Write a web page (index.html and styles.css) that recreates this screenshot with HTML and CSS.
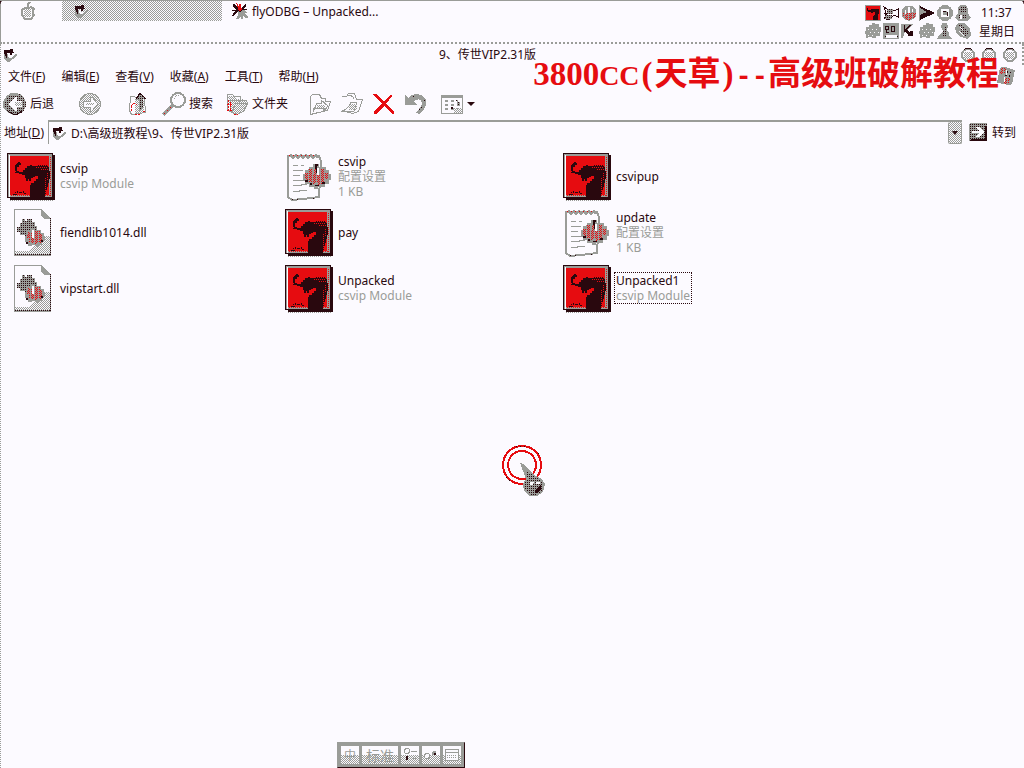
FILE: index.html
```html
<!DOCTYPE html>
<html lang="zh-CN">
<head>
<meta charset="utf-8">
<title>9、传世VIP2.31版</title>
<link rel="stylesheet" href="styles.css">
</head>
<body>
<svg class="defs" aria-hidden="true">
  <defs>
    <pattern id="mesh" width="2" height="2" patternUnits="userSpaceOnUse"><path fill="#9a9c98" d="M0 0h1v1h-1zM1 1h1v1h-1z"/></pattern>
    <pattern id="dark" width="2" height="2" patternUnits="userSpaceOnUse"><path fill="#9a9c98" d="M0 0h2v2h-2z"/><path fill="#29080e" d="M0 0h1v1h-1z"/></pattern>
    <pattern id="redmesh" width="4" height="2" patternUnits="userSpaceOnUse"><path fill="#9a9c98" d="M0 0h4v2h-4z"/><path fill="#e60c10" d="M0 0h1v1h-1zM2 0h1v1h-1zM1 1h1v1h-1z"/></pattern>
  </defs>
  <symbol id="dragon" viewBox="0 0 48 48">
    <path fill="#29080e" d="M0 0h46v2h2v45H3v-2H0z"/><path fill="none" stroke="#9a9c98" stroke-dasharray="1 1" d="M3 47.500h44"/>
    <path fill="#9a9c98" d="M1 1h44v43H1z"/><path fill="#fcfaff" d="M2 2h1v42H2z"/>
    <path fill="#e60c10" d="M3 3h39v39H3z"/>
    <path fill="none" stroke="#e60c10" stroke-dasharray="1 1" d="M43.500 4v39M4 42.500h39"/>
    <path fill="#29080e" d="M13 10h1v2h-2v2h-2v4h2v1h4v-2h2v-2h2v-2h3v-1h2v1h6v-1h10v2h1v4h1v8h-1v4h-1v4h-1v3h-1v4h-1v3H23V32h1v-2h3v-2h2v-2h2v-3h-3v1h-2v1h-2v3h-2v-2h-1v2h-2v-3h-1v-3h-3v-1h-3v-1h-4v-1H9v-1H8v-6h1v-1h1v-1h1v-1h2z"/>
    <path fill="none" stroke="#e60c10" stroke-dasharray="1 1" d="M29 14.500h12M30 12.500h11M34 16.500h8"/>
    <path fill="none" stroke="#e60c10" stroke-dasharray="1 1" d="M38.500 25v16M40.500 20v8"/>
    <path fill="#29080e" d="M8 39h1v1H8zM10 38h1v2h-1zM12 39h3v1h-3zM16 38h1v2h-1zM6 41h4v1H6zM17 40h2v1h-2z"/>
  </symbol>
  <symbol id="dll" viewBox="0 0 48 48">
    <path fill="#fcfaff" stroke="#9a9c98" d="M7.500.500h27l9 9v37h-36z"/>
    <path fill="url(#mesh)" d="M34 27h9v19H8v-4h13l7-6h5z"/>
    <path fill="#9a9c98" d="M34 0l10 10h-6l-4-3z"/><path stroke="#29080e" stroke-dasharray="1 1" d="M8 45.500h35M43.500 9v37"/>
    <path fill="url(#dark)" d="M15 10h3v2h2v-2h5v3h3v4h2v5h-3v4h-5v3h-4v-3h-5v-3h-3v-5h3v-4h2z"/>
    <path fill="#9a9c98" d="M20 21h4v-2h3v2h7v3h3v3h1v5h-3v4h-3v2h-3v-2h-4v1h-4v-4h-3v-6h2z"/>
    <path fill="url(#redmesh)" d="M21 23h4v3h2v-4h6v3h3v6h-2v3h-5v2h-2v-2h-5v-5h-2z"/>
    <path fill="#fcfaff" d="M25 21h2v8h-2z"/><path fill="#29080e" d="M19 33h2v2h-2zM34 31h2v2h-2z"/>
  </symbol>
  <symbol id="ini" viewBox="0 0 48 48">
    <path fill="#fcfaff" stroke="#9a9c98" stroke-width="2" d="M3 3h31l2 5-2 36-7 1-20 2-4-3z"/>
    <path fill="none" stroke="#9a9c98" stroke-width="2" d="M3 4l3-2 2 3 3-3 2 3 3-3 2 3 3-3 2 3 3-3 2 3 3-3 2 3"/>
    <path stroke="#e60c10" stroke-dasharray="1 3" d="M4 2.500h28"/>
    <path fill="none" stroke="#9a9c98" d="M8 12.500h5M16 12.500h3M8 17.500h10M8 22.500h7M8 27.500h12M8 32.500h7l3-1h4M8 38.500h5l3-1h6"/>
    <path stroke="#29080e" stroke-dasharray="1 4" d="M7 46.500h7M28 45.500h5"/>
    <path fill="#9a9c98" d="M28 11h6v3h7v3h3v4h2v6h-2v4h-4v3h-7v2h-4v-2h-5v-3h-4v-4h-2v-6h2v-4h4v-3h4z"/>
    <path fill="url(#redmesh)" d="M23 16h4v5h2v-5h2v6h4v-6h5v4h3v6h-3v4h-3v2h-4v-2h-4v2h-3v-3h-4v-3h-2v-6h3z"/>
    <path fill="#29080e" d="M30 11h3v2h-1v7h-1zM20 27h3v2h-3zM25 30h2v2h-2zM37 29h3v2h-3zM30 32h4v1h-4z"/><path fill="#fcfaff" d="M32 15h2v7h-2z"/>
  </symbol>
  <symbol id="back" viewBox="0 0 24 24">
    <circle cx="12" cy="12" r="11" fill="url(#dark)"/><path fill="none" stroke="#29080e" d="M5 19q7 7 14 0"/><path fill="none" stroke="#9a9c98" stroke-width="2" d="M2 17A11 11 0 0 1 15 2"/>
    <path fill="#fcfaff" d="M12 5h2v4h5v6h-5v4h-2l-7-7z"/><path fill="url(#mesh)" d="M12 10h7v4h-7z"/>
  </symbol>
  <symbol id="forward" viewBox="0 0 24 24">
    <circle cx="12" cy="12" r="10.500" fill="url(#mesh)" stroke="#9a9c98"/>
    <path fill="#fcfaff" stroke="#9a9c98" d="M5 9h7V5h2l6 7-6 7h-2v-4H5z"/><path fill="url(#mesh)" d="M8 11h8v2h-8z"/>
  </symbol>
  <symbol id="up" viewBox="0 0 24 24">
    <path fill="#fcfaff" stroke="#9a9c98" d="M4.500 4.500h4l2 2h8l1 14-14 2-2-4z"/><path fill="url(#mesh)" d="M9 8h9v13H9z"/>
    <path fill="url(#dark)" d="M9 8l5-7 7 6h-4v8l-4 4V8z"/><path fill="none" stroke="#29080e" d="M10 7l4-6 6 6"/>
    <path fill="none" stroke="#e60c10" stroke-dasharray="2 1" d="M5 14q3-4 6-1M5 14v6M9 22h5M17 19h2"/>
  </symbol>
  <symbol id="search" viewBox="0 0 24 24">
    <path stroke="#9a9c98" stroke-width="4" d="M1 23l10-10"/><path stroke="#e60c10" stroke-dasharray="2 2" d="M2 22l8-8"/>
    <circle cx="16" cy="8" r="7" fill="#fcfaff" stroke="#9a9c98" stroke-width="2"/><path fill="none" stroke="#9a9c98" stroke-dasharray="1 1" d="M12 7q1-4 5-4"/>
  </symbol>
  <symbol id="folder" viewBox="0 0 24 24">
    <path fill="#fcfaff" stroke="#9a9c98" d="M2.500 18V2.500h5l2 2h6v4h6l1 3-4 8-7 3z"/><path fill="url(#mesh)" d="M3 4h6l2 3h8l3 5-4 8-7 2-6-6z"/>
    <path fill="none" stroke="#9a9c98" d="M7 20l4-9h12M5 8h8l2 3"/>
    <path stroke="#e60c10" stroke-dasharray="2 1" d="M3 8v12M5 10v8M2 12h6M2 18h6M9 22h4"/>
  </symbol>
  <symbol id="moveto" viewBox="0 0 24 24">
    <path fill="#fcfaff" stroke="#9a9c98" d="M2.500 22.500v-18l2-2h7l2 4h4v3h5l-3 9-9 2z"/><path fill="none" stroke="#9a9c98" d="M5 20l4-9h4V8l7 6-5 6v-4H6z"/><path fill="url(#mesh)" d="M9 13h8v4h-8z"/>
  </symbol>
  <symbol id="copyto" viewBox="0 0 24 24">
    <path fill="#fcfaff" stroke="#9a9c98" d="M1.500 4.500h5l2-3h6l2 6h6l-4 12-6 2-10-3"/><path fill="none" stroke="#9a9c98" d="M3 19q7-4 8-9h6l-3 9zM8 3q7 1 6 6"/><path fill="url(#mesh)" d="M9 12h8v6h-8z"/>
  </symbol>
  <symbol id="delete" viewBox="0 0 24 24">
    <path fill="none" stroke="#9a9c98" stroke-width="2" d="M3 3l18 18"/><path fill="#e60c10" d="M1 2h3l8 8 6-7h2v1l-6 8 8 8v2h-2l-8-8-8 8H2v-3l8-8-9-8z"/>
  </symbol>
  <symbol id="undo" viewBox="0 0 24 24">
    <path fill="#9a9c98" d="M1 3l3 3q6-6 13-3 7 4 5 10-2 5-6 9l-5-1q6-5 7-10-2-6-8-2l3 4H1z"/><path stroke="#29080e" stroke-dasharray="1 2" d="M9 4h2M20 8v3M18 15l-4 5"/>
  </symbol>
  <symbol id="views" viewBox="0 0 24 24">
    <path fill="#fcfaff" stroke="#9a9c98" d="M1.500 3.500h21v18h-21z"/><path fill="#9a9c98" d="M1 3h22v3H1z"/>
    <path stroke="#9a9c98" stroke-width="2" stroke-dasharray="3 3" d="M5 9h13M5 13h13M5 17h13"/><path fill="#29080e" d="M16 8h1v1h-1zM11 15h2v2h-2z"/><path fill="url(#dark)" d="M17 10h3v4h-3z"/><path fill="url(#mesh)" d="M14 16h8v5h-8z"/>
  </symbol>
  <symbol id="go" viewBox="0 0 20 20">
    <rect x="1" y="1" width="18" height="18" rx="2" fill="url(#dark)"/><path fill="none" stroke="#29080e" stroke-width="2" d="M3 18h15V4"/><path fill="#fcfaff" d="M4 9h7L8 5h3l5 5-5 5H8l3-4H4z"/>
  </symbol>
  <symbol id="book" viewBox="0 0 14 14">
    <path fill="#9a9c98" d="M1 3h3l1 6 3 1 4-4h2v2l-4 3-4 3H4l-3-3z"/><path fill="#29080e" d="M1 2h6V1h3v3h1v1H9v2H7V5H4v5H3V8H2V6H1z"/><path fill="#fcfaff" d="M5 6h2v2h2v2H6z"/>
  </symbol>
  <symbol id="splat" viewBox="0 0 16 16">
    <path fill="#9a9c98" d="M6 7h6l3 2v1h-3l4 4v1h-3l-2-3v4H9v-3l-3 3H4l2-4z"/><path fill="#29080e" d="M1 1h1l4 4h4l3-4h1v2l-3 3h4v1h-5l-2 2-2-1-5 5H0l3-5H0V7h4L1 3z"/><path fill="#e60c10" d="M4 0h1l2 4V1h2v3l1 2-1 2H7L6 5z"/>
  </symbol>
  <symbol id="winbutton" viewBox="0 0 16 16">
    <circle cx="8" cy="8" r="6" fill="#fcfaff" stroke="#9a9c98" stroke-width="2"/><path fill="url(#mesh)" d="M4 5h8v7H4z"/><path fill="none" stroke="#29080e" d="M4 3q4-4 8 0"/>
  </symbol>
  <symbol id="blob" viewBox="0 0 16 16">
    <path fill="#9a9c98" d="M1 4h3V2h3V0h3v1h4v3h2v5h-1v4h-4v2H7v-1H3v1H1v-4H0V8h1z"/><path stroke="#fcfaff" stroke-dasharray="1 3" d="M3 6h9M5 9h9M3 12h8"/>
  </symbol>
</svg>

<header class="menubar">
  <button class="apple" aria-label="Apple"><svg viewBox="0 0 14 18"><path fill="#fcfaff" stroke="#9a9c98" stroke-width="2" d="M5 6q2 1 5-1l3 2q-3 3 0 6l-3 4H4l-3-4V8l3-2z"/><path stroke="#9a9c98" stroke-width="2" d="M7 5V2l2-2"/><path fill="url(#mesh)" d="M3 7h7v8H3z"/></svg></button>
  <button class="task current" aria-label="9、传世VIP2.31版"><svg class="small"><use href="#book"/></svg></button>
  <button class="task"><svg class="task-icon"><use href="#splat"/></svg>flyODBG – Unpacked...</button>
  <div class="tray">
    <svg viewBox="0 0 16 16"><path fill="#e60c10" stroke="#9a9c98" d="M.500.500h15v15H.500z"/><path fill="#29080e" d="M2 3h1v2h3V4h8v5h-1v6H8v-4l2-2V7H8v1H6V7H3V6H2z"/></svg>
    <svg viewBox="0 0 16 16"><path fill="#fcfaff" stroke="#29080e" d="M1 2l3 2h5l2 2 4-2v8l-4-2-3 3-3 2-4-2 3-3-3-2h2z"/><path fill="url(#dark)" d="M4 4h6v5H4zM2 10h7v4H2z"/></svg>
    <svg viewBox="0 0 16 16"><circle cx="8" cy="8" r="7.500" fill="#9a9c98"/><path fill="url(#redmesh)" d="M1 8h14l-2 5-5 3-5-3z"/><path fill="#fcfaff" d="M7 2h2v6H7zM4 5h1v4H4zM11 4h1v3h-1z"/></svg>
    <svg viewBox="0 0 16 16"><path fill="#29080e" d="M1 1l15 7-15 7z"/><path fill="#9a9c98" d="M0 0h1v16H0zM1 3l7 4-7 3z"/></svg>
    <svg viewBox="0 0 16 16"><circle cx="8" cy="8" r="8" fill="#9a9c98"/><path fill="none" stroke="#fcfaff" stroke-width="2" d="M5 5h6v6H5z"/><path fill="#29080e" d="M6 6h3v1H6zM10 7h1v4h-1z"/></svg>
    <svg viewBox="0 0 16 16"><path fill="#9a9c98" d="M5 0h6l2 4v4l3 5-4 3H3l-3-3 3-5V3z"/><path fill="url(#dark)" d="M6 1h4l2 5-2 2H5L4 4zM3 10h9v3H3z"/><path fill="#fcfaff" d="M5 10h2v4H5z"/></svg>
    <svg><use href="#blob"/></svg>
    <svg viewBox="0 0 16 16"><path fill="#9a9c98" d="M0 0h16v16H0z"/><path fill="none" stroke="#29080e" d="M2 3h3v3H2zM3 6v3h3M8 3h3v5H8zM2 13.500h13"/><path fill="#fcfaff" d="M3 12h11v3H3z"/></svg>
    <svg viewBox="0 0 16 16"><path fill="#9a9c98" d="M0 1h12L4 9l-2 6H0z"/><path fill="#29080e" d="M3 2h1v4l5-4h1l-4 5 2 2h1l-1-1h4v5h-5v-2l-3-2H3z"/></svg>
    <svg><use href="#blob"/></svg>
    <svg viewBox="0 0 16 16"><path fill="#9a9c98" d="M5 0h5l1 4-2 3 3 3v3l4 3H0l3-5 3-3-2-4z"/><path fill="url(#dark)" d="M7 4h3v9H6z"/></svg>
    <svg viewBox="0 0 16 16"><path fill="#9a9c98" d="M3 0h6l6 6 1 6-4 4-6-2-4-3-2-6z"/><path fill="url(#dark)" d="M4 2l5 1 5 7-3 4-5-4z"/><path stroke="#fcfaff" d="M4 8l5 5M5 4l3 3"/></svg>
  </div>
  <div class="clock"><time>11:37</time><span>星期日</span></div>
</header>

<main class="window">
  <div class="titlebar">
    <svg class="small"><use href="#book"/></svg>
    <h1>9、传世VIP2.31版</h1>
    <div class="winbuttons">
      <button aria-label="最小化"><svg><use href="#winbutton"/></svg></button>
      <button aria-label="最大化"><svg><use href="#winbutton"/></svg></button>
      <button aria-label="关闭"><svg><use href="#winbutton"/></svg></button>
    </div>
  </div>
  <nav class="menus">
    <button>文件(<u>F</u>)</button><button>编辑(<u>E</u>)</button><button>查看(<u>V</u>)</button><button>收藏(<u>A</u>)</button><button>工具(<u>T</u>)</button><button>帮助(<u>H</u>)</button>
  </nav>
  <div class="toolbar">
    <button><svg><use href="#back"/></svg>后退</button>
    <button class="far" aria-label="前进"><svg><use href="#forward"/></svg></button>
    <button class="far" aria-label="向上"><svg><use href="#up"/></svg></button>
    <button class="near"><svg><use href="#search"/></svg>搜索</button>
    <button class="near"><svg><use href="#folder"/></svg>文件夹</button>
    <button class="mid" aria-label="移至"><svg><use href="#moveto"/></svg></button>
    <button aria-label="复制到"><svg><use href="#copyto"/></svg></button>
    <button aria-label="删除"><svg><use href="#delete"/></svg></button>
    <button aria-label="撤消"><svg><use href="#undo"/></svg></button>
    <button class="near" aria-label="查看"><svg><use href="#views"/></svg><i class="arrow"></i></button>
  </div>
  <form class="address">
    <label for="path">地址(<u>D</u>)</label>
    <div class="field">
      <svg class="small"><use href="#book"/></svg>
      <input id="path" type="text" value="D:\高级班教程\9、传世VIP2.31版">
      <button type="button" class="drop" aria-label="展开"><i class="arrow"></i></button>
    </div>
    <button type="button" class="go"><svg><use href="#go"/></svg>转到</button>
  </form>
  <ul class="files">
    <li><svg><use href="#dragon"/></svg><p>csvip<small>csvip Module</small></p></li>
    <li><svg><use href="#ini"/></svg><p>csvip<small>配置设置</small><small>1 KB</small></p></li>
    <li><svg><use href="#dragon"/></svg><p>csvipup</p></li>
    <li><svg><use href="#dll"/></svg><p>fiendlib1014.dll</p></li>
    <li><svg><use href="#dragon"/></svg><p>pay</p></li>
    <li><svg><use href="#ini"/></svg><p>update<small>配置设置</small><small>1 KB</small></p></li>
    <li><svg><use href="#dll"/></svg><p>vipstart.dll</p></li>
    <li><svg><use href="#dragon"/></svg><p>Unpacked<small>csvip Module</small></p></li>
    <li><svg><use href="#dragon"/></svg><p class="focused">Unpacked1<small>csvip Module</small></p></li>
  </ul>
</main>

<div class="banner">
  <span>3800<span class="caps">CC</span><span class="paren">(</span>天草<span class="paren">)</span><span class="dash">--</span>高级班破解教程</span>
  <svg viewBox="0 0 20 20"><path fill="#9a9c98" d="M4 2q4-3 8 0l7 2-3 14q-4 3-7 0l-8-1z"/><path fill="url(#redmesh)" d="M5 2h5l-1 6H4zM9 12h5l-1 6H8z"/><path fill="#29080e" d="M11 5h1v2h-1zM14 6h1v1h-1zM9 9h2v1H9zM13 9h1v2h-1z"/><path fill="#fcfaff" d="M10 4h1v5h-1zM8 11h1v5H8z"/></svg>
</div>

<svg class="pointer" viewBox="0 0 46 54">
  <circle cx="21" cy="21" r="19" fill="none" stroke="#e60c10" stroke-width="2"/><circle cx="21" cy="21" r="14" fill="none" stroke="#e60c10" stroke-width="2"/>
  <path stroke="#29080e" stroke-dasharray="1 3" d="M15 2h12M5 33l4 4M37 9l2 4"/>
  <path fill="#9a9c98" d="M19 19l4 1 10 11 8 4 3 5-2 8-6 4h-7l-6-5-1-7 3-5z"/><path fill="url(#dark)" d="M25 27l8 5 9 6-1 9-6 4h-6l-5-5v-7l3-4z"/>
  <path fill="#fcfaff" d="M29 38h4l-1 3h-3zM35 38h4v2h-4z"/><path fill="#29080e" d="M36 44l4-3v4l-3 4h-3v-3z"/>
</svg>

<div class="ime">
  <button>中</button><button class="wide">标准</button>
  <button aria-label="半角"><svg viewBox="0 0 16 16"><circle cx="5" cy="4" r="2.500" fill="none" stroke="#9a9c98"/><path stroke="#9a9c98" d="M9 4.500h6M10 11.500h5"/><path fill="#29080e" d="M4 9h2v4H4z"/></svg></button>
  <button aria-label="标点"><svg viewBox="0 0 16 16"><circle cx="4" cy="9" r="2.500" fill="#fcfaff" stroke="#9a9c98"/><circle cx="11" cy="6" r="2" fill="#9a9c98"/><path fill="#29080e" d="M11 6h2v2h-2z"/></svg></button>
  <button aria-label="软键盘"><svg viewBox="0 0 16 16"><path fill="#fcfaff" stroke="#9a9c98" d="M1.500 2.500h13v11h-13zM1 5.500h14"/><path stroke="#9a9c98" stroke-dasharray="1 1" d="M3 8.500h10M3 10.500h10"/></svg></button>
</div>
</body>
</html>
```
FILE: styles.css
```css
:root {
  --paper: #fcfaff;
  --gray: #9a9c98;
  --ink: #29080e;
  --red: #e60c10;
  --mesh: repeating-conic-gradient(var(--gray) 0 25%, var(--paper) 0 50%) 0 0 / 2px 2px;
}
* { box-sizing: border-box; }
body {
  position: relative;
  display: flex;
  flex-direction: column;
  min-height: 100vh;
  margin: 0;
  overflow: hidden;
  border-top: 1px solid var(--gray);
  background: var(--paper);
  color: var(--ink);
  font: 12px/15px "Noto Sans", "Noto Sans CJK SC", sans-serif;
}
body::before, body::after {
  content: "";
  position: absolute;
  top: -1px;
  width: 4px;
  height: 4px;
}
body::before { left: 0; background: radial-gradient(circle at 100% 100%, transparent 3px, var(--ink) 4px); }
body::after { right: 0; background: radial-gradient(circle at 0 100%, transparent 3px, var(--ink) 4px); }
svg { display: block; flex: none; shape-rendering: crispEdges; }
.defs { position: absolute; width: 0; height: 0; }
button {
  display: flex;
  align-items: center;
  padding: 0;
  border: 0;
  background: none;
  color: inherit;
  font: inherit;
  white-space: nowrap;
}
.small { width: 14px; height: 14px; }
.arrow { border: 4px solid transparent; border-top-color: var(--ink); border-bottom: 0; }

.menubar {
  display: flex;
  align-items: flex-start;
  height: 43px;
  border-left: 1px solid var(--gray);
  border-bottom: 2px dotted var(--gray);
}
.apple { width: 61px; padding: 1px 0 0 20px; }
.apple svg { width: 14px; height: 18px; }
.task { height: 20px; gap: 4px; margin-right: 10px; }
.task-icon { width: 16px; height: 16px; }
.task.current { width: 160px; padding-left: 12px; background: var(--mesh); }
.tray {
  display: grid;
  grid-template-columns: repeat(6, 16px);
  gap: 2px;
  margin: 4px 8px 0 auto;
}
.tray svg { width: 16px; height: 16px; }
.clock {
  display: flex;
  flex-direction: column;
  gap: 4px;
  width: 45px;
  padding-top: 4px;
}
.clock time { padding-left: 2px; }

.window { border-left: 1px dotted var(--gray); flex: 1; }
.titlebar {
  display: grid;
  grid-template-columns: 1fr auto 1fr;
  align-items: center;
  height: 21px;
  padding: 0 4px 0 2px;
  border-right: 2px dotted var(--gray);
}
.titlebar h1 { margin: 0; padding-right: 46px; font-size: 12px; font-weight: 400; }
.winbuttons { display: flex; justify-content: flex-end; gap: 5px; }
.winbuttons svg { width: 16px; height: 16px; }
.menus { display: flex; gap: 16px; height: 22px; padding-left: 7px; }
.toolbar { display: flex; align-items: center; gap: 8px; height: 33px; padding-left: 2px; }
.toolbar button { gap: 3px; }
.toolbar svg { width: 24px; height: 24px; }
.toolbar .far { margin-left: 16px; }
.toolbar .mid { margin-left: 12px; }
.toolbar .near { margin-left: 4px; }
.address { display: flex; align-items: center; height: 24px; padding-left: 3px; }
.address label { width: 44px; white-space: nowrap; }
.field {
  display: flex;
  align-items: center;
  flex: 1;
  height: 24px;
  padding-left: 3px;
  border-top: 2px solid var(--gray);
  border-left: 1px solid var(--gray);
}
.field input {
  flex: 1;
  min-width: 0;
  padding: 0 5px;
  border: 0;
  outline: 0;
  background: none;
  color: inherit;
  font: inherit;
}
.drop {
  justify-content: center;
  width: 14px;
  height: 22px;
  border: 1px solid var(--gray);
  border-top: 0;
  border-radius: 2px;
  background: var(--mesh);
}
.drop .arrow { border-width: 4px 3px 0; }
.go { gap: 4px; margin: 0 8px 0 6px; }
.go svg { width: 20px; height: 20px; }

.files {
  display: grid;
  grid-template-columns: repeat(auto-fill, 278px);
  grid-auto-rows: 56px;
  margin: 5px 0 0;
  padding: 0 0 0 6px;
  list-style: none;
}
.files li { display: flex; align-items: center; gap: 4px; }
.files svg { width: 48px; height: 48px; }
.files p { margin: 0 0 2px; padding: 0 1px; }
.files small { display: block; color: var(--gray); font-size: 12px; }
.focused { outline: 1px dotted var(--ink); }

.banner {
  position: absolute;
  top: 49px;
  right: 8px;
  display: flex;
  align-items: center;
  color: var(--red);
  font: bold 33px/48px "Liberation Serif", "Noto Sans CJK SC", serif;
  white-space: nowrap;
}
.banner svg { width: 20px; height: 20px; margin-left: -3px; }
.caps { font-size: 28px; }
.paren { padding: 0 2px; }
.dash { font-family: "Liberation Mono", monospace; font-size: 27px; }
.pointer { position: absolute; left: 501px; top: 443px; width: 46px; height: 54px; }
.ime {
  position: absolute;
  left: 337px;
  bottom: 0;
  display: flex;
  gap: 3px;
  padding: 3px;
  border: 1px solid var(--gray);
  border-right-color: var(--ink);
  border-bottom-color: var(--ink);
  background: var(--gray);
}
.ime button {
  justify-content: center;
  width: 18px;
  height: 18px;
  background: linear-gradient(var(--paper) 50%, transparent 50%), var(--mesh);
  color: var(--gray);
}
.ime .wide { width: 36px; font-size: 14px; }
.ime svg { width: 16px; height: 16px; }
```
